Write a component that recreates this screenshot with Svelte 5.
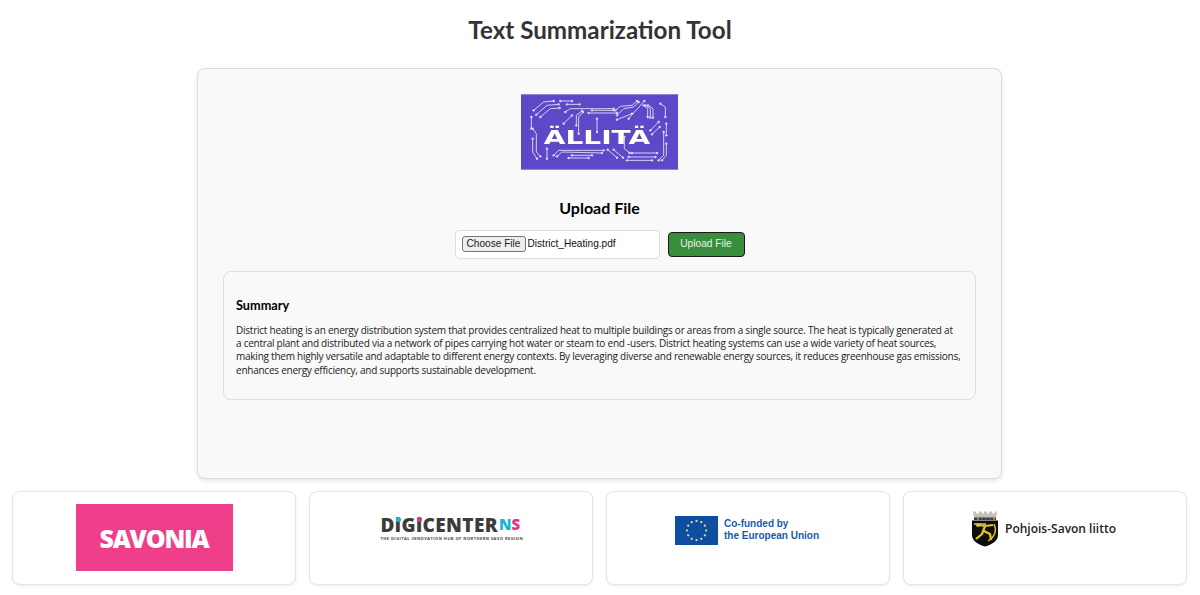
<script>
  const traces = [
    "100,90 130,65 160,62", "108,103 140,75 175,72", "120,110 150,85 178,83",
    "180,62 215,62", "200,72 238,72", "195,95 210,85 340,85", "265,98 350,98", "275,90 340,90",
    "190,130 215,105", "228,135 228,105 245,92", "235,160 235,110 248,95", "290,115 290,155",
    "345,90 360,78 395,75 410,62", "350,105 370,85 400,80 415,65", "350,118 395,100", "385,115 432,62",
    "430,75 442,85 442,110", "435,75 450,85 450,112", "443,75 458,85 458,112", "480,70 495,80 495,110",
    "450,150 475,125", "455,162 478,140", "498,130 498,165", "490,155 490,225 475,240", "498,190 498,225 485,240",
    "93,110 93,145", "97,145 108,160 108,215 120,228", "97,175 97,215 110,235", "140,205 140,235",
    "160,225 175,210 310,210", "170,228 185,215 305,218", "215,225 275,225", "205,233 265,233",
    "322,208 350,232", "340,208 368,232", "372,170 372,205 388,218", "395,218 470,218", "385,230 465,230", "380,240 455,240"
  ];
  const ends = traces.flatMap((t) => {
    const p = t.split(" ");
    return [p[0], p[p.length - 1]];
  }).map((s) => s.split(",").map(Number));
  const stars = Array.from({ length: 12 }, (_, i) => {
    const a = (i * Math.PI) / 6;
    return [21.5 + 9.6 * Math.cos(a), 14.5 + 9.6 * Math.sin(a)];
  });
  const paragraph = "District heating is an energy distribution system that provides centralized heat to multiple buildings or areas from a single source. The heat is typically generated at a\u00a0central plant and distributed via a network of pipes carrying hot water or steam to end -users. District heating systems can use a wide variety of heat sources, making them highly versatile and adaptable to different energy contexts. By leveraging diverse and renewable energy sources, it reduces greenhouse gas emissions, enhances energy efficiency, and supports sustainable development.";
</script>

<div class="page">
  <h1>Text Summarization Tool</h1>

  <main class="panel">
    <svg class="allita" viewBox="62 42 471 226" role="img" aria-label="Ällitä logo">
      <rect x="62" y="42" width="471" height="226" fill="#5f48c8" />
      <g fill="none" stroke="#d5cff4" stroke-width="3">
        {#each traces as t}
          <polyline points={t} />
        {/each}
      </g>
      <g fill="#d9d4f6">
        {#each ends as e}
          <circle cx={e[0]} cy={e[1]} r="3.6" />
        {/each}
      </g>
      <text class="allita-word" x="130" y="190" textLength="320" lengthAdjust="spacingAndGlyphs">ÄLLITÄ</text>
    </svg>

    <h2>Upload File</h2>

    <form class="upload" onsubmit={(e) => e.preventDefault()}>
      <div class="file">
        <button type="button" class="choose">Choose File</button>
        <span class="filename">District_Heating.pdf</span>
      </div>
      <button type="submit" class="send">Upload File</button>
    </form>

    <section class="summary">
      <h3>Summary</h3>
      <p>{paragraph}</p>
    </section>
  </main>

  <footer class="logos">
    <div class="card">
      <div class="savonia">SAVONIA</div>
    </div>

    <div class="card">
      <div class="digi">
        <div class="digi-word">D<span class="dot cyan">i</span>G<span class="dot pink">i</span>CENTER<span class="ns"><span class="n">N</span><span class="s">S</span></span></div>
        <div class="digi-sub">THE DIGITAL INNOVATION HUB OF NORTHERN SAVO REGION</div>
      </div>
    </div>

    <div class="card">
      <div class="eu">
        <svg width="43" height="29" viewBox="0 0 43 29" aria-hidden="true">
          <rect width="43" height="29" fill="#0f4da0" />
          {#each stars as s}
            <circle cx={s[0]} cy={s[1]} r="1.1" fill="#e6e3a0" />
          {/each}
        </svg>
        <div class="eu-text">Co-funded by<br />the European Union</div>
      </div>
    </div>

    <div class="card">
      <div class="savo">
        <svg width="28" height="37" viewBox="0 0 28 37" aria-hidden="true">
          <path d="M2 1.5h3v2h3v-2h3v2h2v-2h3v2h2v-2h3v2h3v-2h2l-1 6.5H3z" fill="#c4c1ba" />
          <rect x="3" y="7.5" width="22" height="2.5" fill="#3a3a38" />
          <circle cx="7" cy="8.7" r="1" fill="#d9b92a" />
          <circle cx="11" cy="8.7" r="1" fill="#3a6fb0" />
          <circle cx="15" cy="8.7" r="1" fill="#c23a3a" />
          <circle cx="19" cy="8.7" r="1" fill="#3a6fb0" />
          <circle cx="23" cy="8.7" r="1" fill="#d9b92a" />
          <path d="M1 10.5h26v14.5c0 6-6 9.500-13 11.500C7 34.500 1 31 1 25z" fill="#0d0d0d" />
          <path d="M3 14h12" fill="none" stroke="#eeeeea" stroke-width="1.200" />
          <path d="M7 15l7 1 8-1M14 16l-3 8-6 5M13 21l6 3 1 6" fill="none" stroke="#e7c51e" stroke-width="2.200" />
          <circle cx="7" cy="15" r="2" fill="#e7c51e" />
          <path d="M23 14c3 6 1 13-6 17" fill="none" stroke="#e7c51e" stroke-width="1.400" />
        </svg>
        <span class="savo-text">Pohjois-Savon liitto</span>
      </div>
    </div>
  </footer>
</div>

<style>
  :global(body) {
    margin: 0;
    background: #fff;
  }
  .page {
    font-family: "Lato", "Noto Sans", sans-serif;
    height: 595px;
    box-sizing: border-box;
    padding: 12px 12px 0;
    display: flex;
    flex-direction: column;
    align-items: center;
    overflow: hidden;
  }
  h1 {
    margin: 0 0 21px;
    height: 35px;
    line-height: 35px;
    font-size: 24.2px;
    font-weight: 700;
    color: #333;
  }
  .panel {
    width: 805px;
    height: 411px;
    margin-right: 1px;
    box-sizing: border-box;
    padding: 25px 25px 0;
    background: #f9f9f9;
    border: 1px solid #ddd;
    border-radius: 8px;
    box-shadow: 0 2px 4px rgba(0, 0, 0, 0.1);
    display: flex;
    flex-direction: column;
    align-items: center;
  }
  .allita {
    width: 157px;
    height: 76px;
    display: block;
    filter: blur(0.3px);
  }
  .allita-word {
    font-family: "DejaVu Sans", sans-serif;
    font-size: 58px;
    font-weight: 700;
    fill: #fff;
  }
  h2 {
    margin: 27px 0 11px;
    height: 22px;
    line-height: 22px;
    font-size: 16px;
    font-weight: 700;
    color: #000;
  }
  .upload {
    display: flex;
    align-items: center;
    gap: 8px;
    height: 29px;
  }
  .file {
    width: 205px;
    height: 29px;
    box-sizing: border-box;
    padding: 0 6px 2px;
    background: #fff;
    border: 1px solid #ddd;
    border-radius: 4px;
    display: flex;
    align-items: center;
    gap: 2px;
    font-family: "Liberation Sans", Arial, sans-serif;
    font-size: 10.1px;
    color: #111;
  }
  .choose {
    height: 16px;
    width: 64px;
    padding: 0;
    font: inherit;
    color: #222;
    background: #efefef;
    border: 1px solid #767676;
    border-radius: 3px;
  }
  .send {
    width: 77px;
    height: 25px;
    padding: 0 0 2px;
    font-family: "Liberation Sans", Arial, sans-serif;
    font-size: 10.2px;
    color: #e8f3e8;
    background: #388e3c;
    border: 1.5px solid #1a1a1a;
    border-radius: 4px;
  }
  .summary {
    align-self: stretch;
    margin-top: 12px;
    height: 129px;
    box-sizing: border-box;
    padding: 25px 12px 0;
    background: #f9f9f9;
    border: 1px solid #ddd;
    border-radius: 8px;
  }
  h3 {
    margin: 0 0 11px;
    height: 16px;
    line-height: 16px;
    font-size: 12.7px;
    font-weight: 700;
    color: #000;
  }
  p {
    margin: 0;
    font-family: "Open Sans", sans-serif;
    font-size: 10px;
    letter-spacing: -0.24px;
    line-height: 13.2px;
    color: #222;
  }
  .logos {
    margin-top: 12px;
    align-self: stretch;
    display: grid;
    grid-template-columns: repeat(4, 284px);
    gap: 13px;
  }
  .card {
    height: 94px;
    box-sizing: border-box;
    background: #fff;
    border: 1px solid #e4e4e4;
    border-radius: 8px;
    box-shadow: 0 1px 3px rgba(0, 0, 0, 0.08);
    display: flex;
    align-items: center;
    justify-content: center;
  }
  .savonia {
    width: 157px;
    height: 67px;
    margin-top: -1px;
    background: #f03f8a;
    color: #fff;
    display: flex;
    align-items: center;
    justify-content: center;
    font-family: "Open Sans", sans-serif;
    font-size: 25px;
    font-weight: 800;
    letter-spacing: -1.2px;
  }
  .digi {
    margin-top: -20px;
    width: 141px;
  }
  .digi-word {
    font-family: "Open Sans", sans-serif;
    font-size: 19px;
    line-height: 21px;
    font-weight: 800;
    letter-spacing: 0.4px;
    color: #3c3c3c;
    white-space: nowrap;
    display: flex;
    align-items: flex-start;
  }
  .dot {
    position: relative;
  }
  .dot::after {
    content: "";
    position: absolute;
    left: 50%;
    top: 2px;
    width: 5px;
    height: 5px;
    margin-left: -2.5px;
    border-radius: 50%;
  }
  .cyan::after {
    background: #18b4d0;
  }
  .pink::after {
    background: #ea2e8c;
  }
  .ns {
    font-size: 15px;
    line-height: 19px;
    margin-left: 1px;
    letter-spacing: 0;
  }
  .n {
    color: #18b4d0;
  }
  .s {
    color: #ea2e8c;
  }
  .digi-sub {
    font-family: "Open Sans", sans-serif;
    font-size: 4px;
    line-height: 5px;
    font-weight: 700;
    letter-spacing: 0.45px;
    color: #444;
    white-space: nowrap;
  }
  .eu {
    display: flex;
    align-items: center;
    gap: 6px;
    margin: -16px 2px 0 0;
  }
  .eu svg,
  .savo svg {
    display: block;
    flex: none;
  }
  .eu-text {
    font-family: "Liberation Sans", Arial, sans-serif;
    font-size: 10px;
    line-height: 12px;
    font-weight: 700;
    color: #1a5aa8;
  }
  .savo {
    display: flex;
    align-items: center;
    gap: 6px;
    margin: -20px 3px 0 0;
  }
  .savo-text {
    font-family: "Open Sans", sans-serif;
    font-size: 12px;
    font-weight: 600;
    color: #222;
  }
</style>
